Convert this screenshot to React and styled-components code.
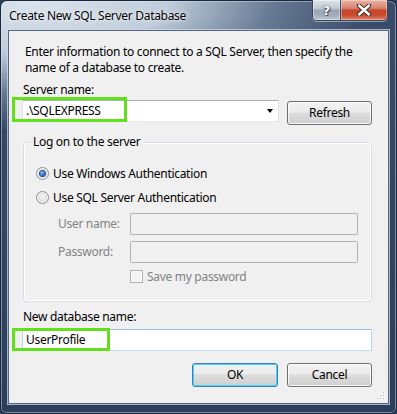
import React from 'react';
import styled, { createGlobalStyle } from 'styled-components';

const Global = createGlobalStyle`
  html, body { margin: 0; padding: 0; background: #2b3c58; }
  body {
    width: 397px; height: 414px; overflow: hidden;
    font-family: "Segoe UI", "Noto Sans", sans-serif;
    font-size: 12px;
    letter-spacing: -0.3px;
  }
  * { box-sizing: border-box; }
`;

const Window = styled.div`
  width: 397px;
  height: 414px;
  border: 1px solid #1b2739;
  border-radius: 7px 7px 6px 6px;
  background:
    radial-gradient(ellipse 340px 130px at 30px 0px, rgba(218,228,238,1) 0%, rgba(196,208,222,0.97) 40%, rgba(120,138,162,0.7) 72%, rgba(60,78,105,0) 100%),
    linear-gradient(#394c6a, #2b3e5c);
  box-shadow: inset 0 0 0 1px rgba(220,232,245,0.45);
  display: flex;
  flex-direction: column;
  padding: 0 7px 9px 7px;
`;

const TitleBar = styled.div`
  height: 29px;
  display: flex;
  align-items: flex-start;
  padding-left: 1px;
`;

const Title = styled.div`
  margin-top: 7px;
  line-height: 16px;
  color: #000;
  text-shadow: 0 0 6px rgba(255,255,255,0.9), 0 0 2px rgba(255,255,255,0.8);
`;

const CaptionGroup = styled.div`
  margin-left: auto;
  margin-right: 1px;
  margin-top: -1px;
  display: flex;
  height: 21px;
  border: 1px solid #37445a;
  border-top: none;
  border-radius: 0 0 5px 5px;
  overflow: hidden;
  box-shadow: 0 1px 0 rgba(255,255,255,0.45);
`;

const CaptionBtn = styled.div`
  width: ${p => p.$w}px;
  height: 100%;
  display: flex;
  align-items: center;
  justify-content: center;
  box-shadow: inset 0 0 0 1px rgba(255,255,255,0.35);
  background: ${p => p.$red
    ? 'linear-gradient(#eab2a4, #d98672 40%, #c6452b 52%, #c9492f 75%, #e0846a)'
    : 'linear-gradient(#dfe4ea, #c0c8d2 42%, #98a4b3 52%, #a4b0be 80%, #c4ccd6)'};
  & + & { border-left: 1px solid #3d4a5e; }
`;

const HelpGlyph = styled.span`
  font-family: "DejaVu Sans", sans-serif;
  font-weight: bold;
  font-size: 13px;
  line-height: 13px;
  letter-spacing: 0;
  color: #fff;
  text-shadow: 0 0 1px #2c3440, 0 0 1px #2c3440, 1px 1px 1px #44505f;
`;

const Client = styled.div`
  flex: 1;
  position: relative;
  background: #f0f0f0;
  border: 1px solid #566780;
  box-shadow: 0 0 0 1px rgba(205,218,232,0.75);
  padding: 13px 16px 0 13px;
  display: flex;
  flex-direction: column;
`;

const Intro = styled.p`
  margin: 0;
  padding-left: 3px;
  line-height: 16px;
  color: #000;
`;

const Label = styled.div`
  margin-top: ${p => p.$mt}px;
  line-height: 16px;
  padding-left: 1px;
  color: #000;
`;

const Row = styled.div`
  display: flex;
  align-items: flex-start;
  margin-top: ${p => p.$mt || 0}px;
`;

const Annotated = styled.div`
  position: relative;
  flex: ${p => p.$flex || 'none'};
  display: flex;
`;

const Highlight = styled.div`
  position: absolute;
  left: -10px;
  top: ${p => p.$top}px;
  width: ${p => p.$w}px;
  height: ${p => p.$h}px;
  border: 3px solid #62e01b;
  pointer-events: none;
`;

const Combo = styled.div`
  width: 257px;
  height: 22px;
  background: #fff;
  border: 1px solid #abadb3;
  border-color: #abadb3 #dbdfe6 #e3e9ef #e2e3ea;
  display: flex;
  align-items: center;
  padding: 0 4px 0 3px;
`;

const FieldText = styled.span`
  flex: 1;
  color: #000;
  line-height: 16px;
`;

const Arrow = styled.span`
  width: 0; height: 0;
  border-left: 3.5px solid transparent;
  border-right: 3.5px solid transparent;
  border-top: 4px solid #000;
  margin-right: 1px;
`;

const Button = styled.div`
  width: ${p => p.$w || 85}px;
  height: 24px;
  margin-left: ${p => p.$ml || 0}px;
  margin-top: ${p => p.$mt || 0}px;
  border: 1px solid ${p => p.$default ? '#3c7fb1' : '#707070'};
  border-radius: 3px;
  background: linear-gradient(#f2f2f2, #ebebeb 45%, #dddddd 50%, #cfcfcf);
  box-shadow: inset 0 0 0 1px ${p => p.$default ? '#48d2fb' : 'rgba(255,255,255,0.8)'};
  display: flex;
  align-items: center;
  justify-content: center;
  color: #000;
  line-height: 16px;
`;

const Group = styled.div`
  position: relative;
  margin-top: 17px;
  margin-left: 1px;
  height: 160px;
  border: 1px solid #d5dfe5;
  border-radius: 3px;
  box-shadow: inset 0 0 0 1px #fff;
  padding: 22px 13px 0 12px;
  display: flex;
  flex-direction: column;
`;

const Legend = styled.div`
  position: absolute;
  top: -9px;
  left: 7px;
  padding: 0 2px;
  background: #f0f0f0;
  line-height: 16px;
  color: #000;
`;

const OptionRow = styled.label`
  display: flex;
  align-items: center;
  gap: 4px;
  height: 16px;
  margin-top: ${p => p.$mt || 0}px;
  color: ${p => p.$disabled ? '#838383' : '#000'};
`;

const Radio = styled.span`
  width: 13px; height: 13px;
  border-radius: 50%;
  border: 1px solid #8e8f8f;
  background: radial-gradient(circle at 50% 45%, #f4f4f4 0%, #e2e2e2 45%, #cfcfcf 100%);
  display: flex;
  align-items: center;
  justify-content: center;
  box-shadow: inset 0 0 0 1px #f8f8f8;
  &::after {
    content: '';
    display: ${p => p.$checked ? 'block' : 'none'};
    width: 5px; height: 5px;
    border-radius: 50%;
    background: radial-gradient(circle at 40% 35%, #8fd0f6 0%, #2a6cc0 55%, #173b7c 100%);
    box-shadow: 0 0 0 1px #1f4f98;
  }
`;

const FieldRow = styled.div`
  display: flex;
  align-items: center;
  margin-top: ${p => p.$mt}px;
`;

const FieldLabel = styled.span`
  width: 94px;
  padding-left: 22px;
  color: #838383;
  line-height: 16px;
`;

const DisabledBox = styled.div`
  width: 228px;
  height: 22px;
  border: 1px solid #adb2b5;
  border-radius: 2px;
  background: #f0f0f0;
`;

const CheckRow = styled.label`
  display: flex;
  align-items: center;
  gap: 4px;
  height: 16px;
  margin-top: 5px;
  margin-left: 94px;
  color: #838383;
`;

const CheckBox = styled.span`
  width: 13px; height: 13px;
  border: 1px solid #b1b1b1;
  background: #f4f4f4;
  box-shadow: inset 0 0 0 1px #fafafa;
`;

const TextBox = styled.div`
  flex: 1;
  height: 22px;
  background: #fff;
  border: 1px solid #a9c9e8;
  border-color: #9cc1e6 #b8d4ef #c6dcf1 #b8d4ef;
  display: flex;
  align-items: center;
  padding: 0 3px;
`;

const ButtonRow = styled.div`
  display: flex;
  justify-content: flex-end;
  margin-top: 12px;
`;

const Grip = styled.svg`
  position: absolute;
  right: 2px;
  bottom: 2px;
`;

const CloseIcon = () => (
  <svg width="16" height="12" viewBox="0 0 16 12">
    <path d="M3 1.5 L13 10.5 M13 1.5 L3 10.5" stroke="#3a2a28" strokeWidth="4.4" strokeLinecap="round" />
    <path d="M3 1.5 L13 10.5 M13 1.5 L3 10.5" stroke="#fff" strokeWidth="2.4" strokeLinecap="round" />
  </svg>
);

export default function App() {
  return (
    <>
      <Global />
      <Window>
        <TitleBar>
          <Title>Create New SQL Server Database</Title>
          <CaptionGroup>
            <CaptionBtn $w={27}><HelpGlyph>?</HelpGlyph></CaptionBtn>
            <CaptionBtn $w={47} $red><CloseIcon /></CaptionBtn>
          </CaptionGroup>
        </TitleBar>
        <Client>
          <Intro>
            Enter information to connect to a SQL Server, then specify the
            <br />
            name of a database to create.
          </Intro>
          <Label $mt={6}>Server name:</Label>
          <Row $mt={2}>
            <Annotated>
              <Combo>
                <FieldText>.\SQLEXPRESS</FieldText>
                <Arrow />
              </Combo>
              <Highlight $top={-3} $w={115} $h={25} />
            </Annotated>
            <Button $ml={8} $mt={1}>Refresh</Button>
          </Row>
          <Group>
            <Legend>Log on to the server</Legend>
            <OptionRow>
              <Radio $checked />
              Use Windows Authentication
            </OptionRow>
            <OptionRow $mt={8}>
              <Radio />
              Use SQL Server Authentication
            </OptionRow>
            <FieldRow $mt={8}>
              <FieldLabel>User name:</FieldLabel>
              <DisabledBox />
            </FieldRow>
            <FieldRow $mt={6}>
              <FieldLabel>Password:</FieldLabel>
              <DisabledBox />
            </FieldRow>
            <CheckRow>
              <CheckBox />
              Save my password
            </CheckRow>
          </Group>
          <Label $mt={7}>New database name:</Label>
          <Row $mt={4}>
            <Annotated $flex="1">
              <TextBox>
                <FieldText>UserProfile</FieldText>
              </TextBox>
              <Highlight $top={-1} $w={98} $h={23} />
            </Annotated>
          </Row>
          <ButtonRow>
            <Button $default $w={86}>OK</Button>
            <Button $ml={9}>Cancel</Button>
          </ButtonRow>
          <Grip width="10" height="10" viewBox="0 0 10 10">
            {[[8, 2], [8, 5], [5, 5], [8, 8], [5, 8], [2, 8]].map(([x, y], i) => (
              <g key={i}>
                <rect x={x} y={y} width="1" height="1" fill="#fff" />
                <rect x={x - 1} y={y - 1} width="1" height="1" fill="#b9bdc2" />
              </g>
            ))}
          </Grip>
        </Client>
      </Window>
    </>
  );
}
